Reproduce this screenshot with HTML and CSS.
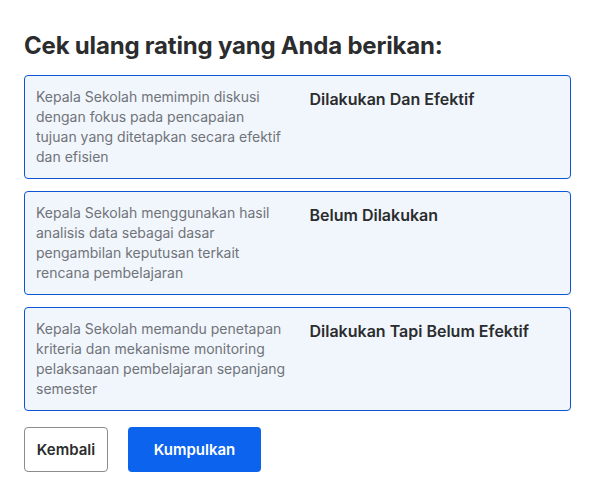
FILE: index.html
```html
<!DOCTYPE html>
<html>
  <head>
    <title>Cek ulang rating</title>
    <link rel="stylesheet" href="styles.css">
  </head>
  <body>
    <div class="container">
      <h1 class="title">Cek ulang rating yang Anda berikan:</h1>

      <div class="review-list">
        <div class="review-card">
          <p class="statement">Kepala Sekolah memimpin diskusi dengan fokus pada pencapaian tujuan yang ditetapkan secara efektif dan efisien</p>
          <p class="rating">Dilakukan Dan Efektif</p>
        </div>
        <div class="review-card">
          <p class="statement">Kepala Sekolah menggunakan hasil analisis data sebagai dasar pengambilan keputusan terkait rencana pembelajaran</p>
          <p class="rating">Belum Dilakukan</p>
        </div>
        <div class="review-card">
          <p class="statement">Kepala Sekolah memandu penetapan kriteria dan mekanisme monitoring pelaksanaan pembelajaran sepanjang semester</p>
          <p class="rating">Dilakukan Tapi Belum Efektif</p>
        </div>
      </div>

      <div class="actions">
        <button class="btn btn-back">Kembali</button>
        <button class="btn btn-submit">Kumpulkan</button>
      </div>
    </div>
  </body>
</html>
```

FILE: styles.css
```css
body {
  margin: 0;
  font-family: Inter, "Noto Sans", sans-serif;
  background-color: #fff;
  color: #2b2c2e;
}

.container {
  padding: 31px 24px 24px;
}

.title {
  margin: 0 0 14px;
  font-size: 24px;
  line-height: 30px;
  font-weight: 700;
  letter-spacing: -0.2px;
  color: #2b2c2e;
}

.review-list {
  display: flex;
  flex-direction: column;
  gap: 12px;
}

.review-card {
  display: grid;
  grid-template-columns: 1fr 1fr;
  gap: 24px;
  padding: 11px;
  min-height: 80px;
  border: 1px solid #0d55d1;
  border-radius: 4px;
  background-color: #f1f6fd;
}

.statement {
  margin: 0;
  font-size: 14px;
  line-height: 20px;
  color: #707378;
}

.rating {
  margin: 0;
  font-size: 16px;
  line-height: 24px;
  font-weight: 600;
  color: #2b2c2e;
}

.actions {
  display: flex;
  gap: 20px;
  margin-top: 16px;
}

.btn {
  height: 45px;
  border-radius: 4px;
  font-family: inherit;
  font-size: 15px;
  font-weight: 600;
  cursor: pointer;
}

.btn-back {
  width: 84px;
  border: 1px solid #8a8c90;
  background-color: #fff;
  color: #2b2c2e;
}

.btn-submit {
  width: 133px;
  border: none;
  background-color: #0b63ee;
  color: #fff;
}
```
